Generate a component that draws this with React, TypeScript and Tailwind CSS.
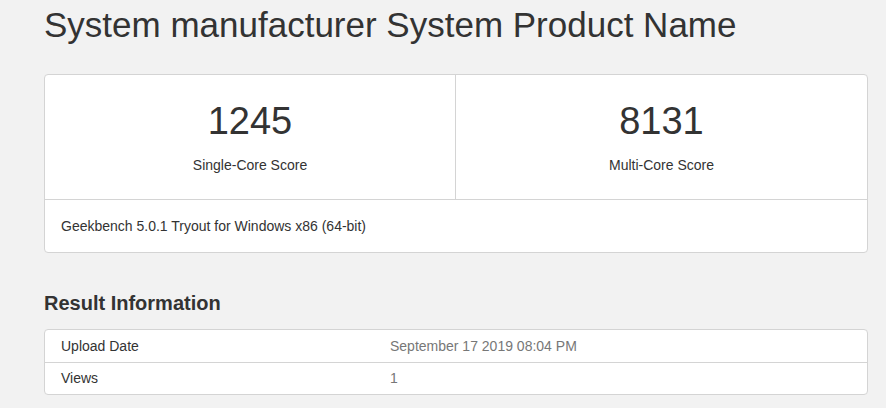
import React from 'react';

const scores = [
  { value: '1245', label: 'Single-Core Score' },
  { value: '8131', label: 'Multi-Core Score' },
];

const info = [
  { label: 'Upload Date', value: 'September 17 2019 08:04 PM' },
  { label: 'Views', value: '1' },
];

const App: React.FC = () => {
  return (
    <div
      className="min-h-screen bg-[#f2f2f2] text-[#333] pl-[44px] pt-[5px]"
      style={{ fontFamily: '"Liberation Sans", Arial, sans-serif' }}
    >
      <div className="w-[824px]">
        <h1 className="text-[35px] leading-[40px] text-[#333]">System manufacturer System Product Name</h1>

        {/* Score card */}
        <div className="mt-[29px] bg-white border border-[#d4d4d4] rounded-[4px]">
          <div className="grid grid-cols-2 border-b border-[#d4d4d4]">
            {scores.map((s, i) => (
              <div
                key={s.label}
                className={`h-[124px] flex flex-col items-center pt-[25px] ${i === 0 ? 'border-r border-[#d4d4d4]' : ''}`}
              >
                <div className="text-[38px] leading-[42px] text-[#333]">{s.value}</div>
                <div className="mt-[13px] text-[14px] leading-[20px] text-[#333]">{s.label}</div>
              </div>
            ))}
          </div>
          <div className="h-[52px] flex items-center px-[16px] text-[14px] text-[#333]">
            Geekbench 5.0.1 Tryout for Windows x86 (64-bit)
          </div>
        </div>

        {/* Result information */}
        <h3 className="mt-[38px] text-[20px] leading-[24px] font-bold text-[#333]">Result Information</h3>
        <div className="mt-[14px] bg-white border border-[#d4d4d4] rounded-[4px]">
          {info.map((row, i) => (
            <div
              key={row.label}
              className={`h-[32px] grid grid-cols-[329px_1fr] items-center pl-[16px] text-[14px] ${i > 0 ? 'border-t border-[#d4d4d4]' : ''}`}
            >
              <span className="text-[#333]">{row.label}</span>
              <span className="text-[#777]">{row.value}</span>
            </div>
          ))}
        </div>
      </div>
    </div>
  );
};

export default App;
